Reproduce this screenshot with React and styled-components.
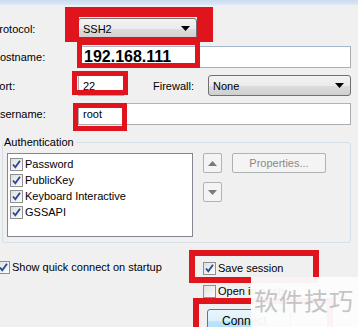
import React from "react";
import styled, { createGlobalStyle } from "styled-components";

const Global = createGlobalStyle`
  html, body { margin: 0; padding: 0; background: #f0f0f0; }
  body { overflow: hidden; }
`;

const Arrow = ({ color = "#000", up }) => (
  <svg width="9" height="5" viewBox="0 0 9 5">
    {up ? <path d="M0 5 L4.5 0 L9 5 Z" fill={color} /> : <path d="M0 0 L9 0 L4.5 5 Z" fill={color} />}
  </svg>
);

const Check = ({ on }) => (
  <CheckBox>
    {on && (
      <svg width="11" height="11" viewBox="0 0 11 11">
        <path d="M2 5.5 L4.3 8.3 L9 1.8" stroke="#2a4a9a" strokeWidth="1.9" fill="none" />
      </svg>
    )}
  </CheckBox>
);

const App = () => {
  return (
    <Page>
      <Global />
      <TitleStrip />
      <Form>
        <Row>
          <Label>Protocol:</Label>
          <Select $width="119px">
            SSH2
            <Arrow />
          </Select>
        </Row>
        <Row $h="22px">
          <Label>Hostname:</Label>
          <Input $big>192.168.111</Input>
        </Row>
        <Row>
          <Label>Port:</Label>
          <Input $width="46px">22</Input>
          <FirewallLabel>Firewall:</FirewallLabel>
          <Select>
            None
            <Arrow />
          </Select>
        </Row>
        <Row $h="22px">
          <Label>Username:</Label>
          <Input>root</Input>
        </Row>
      </Form>
      <Group>
        <Legend>Authentication</Legend>
        <GroupBody>
          <ListBox>
            {["Password", "PublicKey", "Keyboard Interactive", "GSSAPI"].map((t) => (
              <Item key={t}>
                <Check on />
                {t}
              </Item>
            ))}
          </ListBox>
          <MoveButtons>
            <SmallButton>
              <Arrow up color="#7a7a7a" />
            </SmallButton>
            <SmallButton>
              <Arrow color="#7a7a7a" />
            </SmallButton>
          </MoveButtons>
          <PropButton>Properties...</PropButton>
        </GroupBody>
      </Group>
      <Footer>
        <QuickItem>
          <Check on />
          Show quick connect on startup
        </QuickItem>
        <RightCol>
          <Item>
            <Check on />
            Save session
          </Item>
          <Item>
            <Check />
            Open in a tab
          </Item>
          <ConnectButton>Connect</ConnectButton>
        </RightCol>
      </Footer>

      <Mark $x={65} $y={7} $w={148} $h={35} $b="10px 16px 5px 14px" />
      <Mark $x={77} $y={40} $w={123} $h={28} $b="5px" />
      <Mark $x={72} $y={71} $w={56} $h={24} $b="5px" />
      <Mark $x={73} $y={103} $w={54} $h={28} $b="5px" />
      <Mark $x={189} $y={250} $w={130} $h={33} $b="6px" />
      <Mark $x={193} $y={298} $w={140} $h={40} $b="6px" />
      <Watermark>软件技巧</Watermark>
    </Page>
  );
};
export default App;

const Page = styled.div`
  position: relative;
  width: 358px;
  height: 327px;
  overflow: hidden;
  background: #f0f0f0;
  font-family: "Liberation Sans", Arial, sans-serif;
  font-size: 11px;
  color: #000;
`;
const TitleStrip = styled.div`
  height: 5px;
  background: linear-gradient(#c9dcef, #dde9f5);
`;
const Form = styled.div`
  display: flex;
  flex-direction: column;
  gap: 7px;
  margin-left: -8px;
  padding: 13px 7px 0 0;
`;
const Row = styled.div`
  display: flex;
  align-items: center;
  height: ${(p) => p.$h || "21px"};
`;
const Label = styled.div`
  width: 86px;
  flex: none;
`;
const FirewallLabel = styled.div`
  width: 55px;
  margin-left: 29px;
  flex: none;
`;
const Select = styled.div`
  box-sizing: border-box;
  width: ${(p) => p.$width || "auto"};
  flex: ${(p) => (p.$width ? "none" : "1")};
  height: 21px;
  display: flex;
  align-items: center;
  justify-content: space-between;
  padding: 0 6px 0 4px;
  border: 1px solid #707070;
  border-radius: 3px;
  background: linear-gradient(#f3f3f3 0%, #ebebeb 50%, #dddddd 51%, #cfcfcf 100%);
`;
const Input = styled.div`
  box-sizing: border-box;
  width: ${(p) => p.$width || "auto"};
  flex: ${(p) => (p.$width ? "none" : "1")};
  height: 100%;
  display: flex;
  align-items: center;
  padding-left: ${(p) => (p.$big ? "5px" : "4px")};
  border: 1px solid #abadb3;
  border-top-color: #a3b7cc;
  background: #fff;
  font-size: ${(p) => (p.$big ? "16px" : "11px")};
  font-weight: ${(p) => (p.$big ? "bold" : "normal")};
`;
const Group = styled.fieldset`
  margin: 11px 7px 0 2px;
  padding: 0 0 5px 4px;
  border: 1px solid #d5dfe5;
  border-radius: 3px;
`;
const Legend = styled.legend`
  margin-left: -3px;
  padding: 0 2px 0 0;
  line-height: 13px;
`;
const GroupBody = styled.div`
  display: flex;
  align-items: flex-start;
  margin-top: 4px;
`;
const ListBox = styled.div`
  box-sizing: border-box;
  width: 186px;
  height: 84px;
  padding: 2px 0 0 2px;
  border: 1px solid #828790;
  background: #fff;
`;
const Item = styled.div`
  display: flex;
  align-items: center;
  gap: 2px;
  height: 16px;
  white-space: nowrap;
`;
const CheckBox = styled.span`
  box-sizing: border-box;
  width: 13px;
  height: 13px;
  flex: none;
  display: flex;
  align-items: center;
  justify-content: center;
  border: 1px solid #8f8f8f;
  background: linear-gradient(135deg, #e0e0e0, #fdfdfd);
`;
const MoveButtons = styled.div`
  display: flex;
  flex-direction: column;
  gap: 9px;
  margin-left: 10px;
`;
const SmallButton = styled.div`
  box-sizing: border-box;
  width: 19px;
  height: 20px;
  display: flex;
  align-items: center;
  justify-content: center;
  border: 1px solid #adb2b5;
  border-radius: 2px;
  background: #f4f4f4;
`;
const PropButton = styled.div`
  box-sizing: border-box;
  width: 94px;
  height: 20px;
  margin-left: 10px;
  display: flex;
  align-items: center;
  justify-content: center;
  border: 1px solid #adb2b5;
  border-radius: 2px;
  background: #f4f4f4;
  color: #8a8a8a;
`;
const Footer = styled.div`
  display: flex;
  align-items: flex-start;
  margin-top: 17px;
`;
const QuickItem = styled(Item)`
  width: 206px;
  margin-left: -3px;
  height: 14px;
`;
const RightCol = styled.div`
  display: flex;
  flex-direction: column;
  gap: 7px;
`;
const ConnectButton = styled.div`
  box-sizing: border-box;
  width: 84px;
  height: 24px;
  margin: 3px 0 0 4px;
  padding-left: 14px;
  display: flex;
  align-items: center;
  border: 1px solid #3c7fb1;
  border-radius: 3px;
  background: linear-gradient(#eaf6fd 0%, #d9f0fc 50%, #bee6fd 51%, #a7d9f5 100%);
  font-size: 12px;
`;
const Mark = styled.div`
  position: absolute;
  left: ${(p) => p.$x}px;
  top: ${(p) => p.$y}px;
  width: ${(p) => p.$w}px;
  height: ${(p) => p.$h}px;
  box-sizing: border-box;
  border: solid #e0141c;
  border-width: ${(p) => p.$b};
`;
const Watermark = styled.div`
  position: absolute;
  left: 251px;
  top: 277px;
  width: 107px;
  height: 50px;
  box-sizing: border-box;
  padding: 9px 0 0 3px;
  background: rgba(252, 252, 252, 0.96);
  color: #c4c4c4;
  font-family: "Noto Sans CJK SC", sans-serif;
  font-size: 24px;
  letter-spacing: 1px;
  line-height: 28px;
`;
